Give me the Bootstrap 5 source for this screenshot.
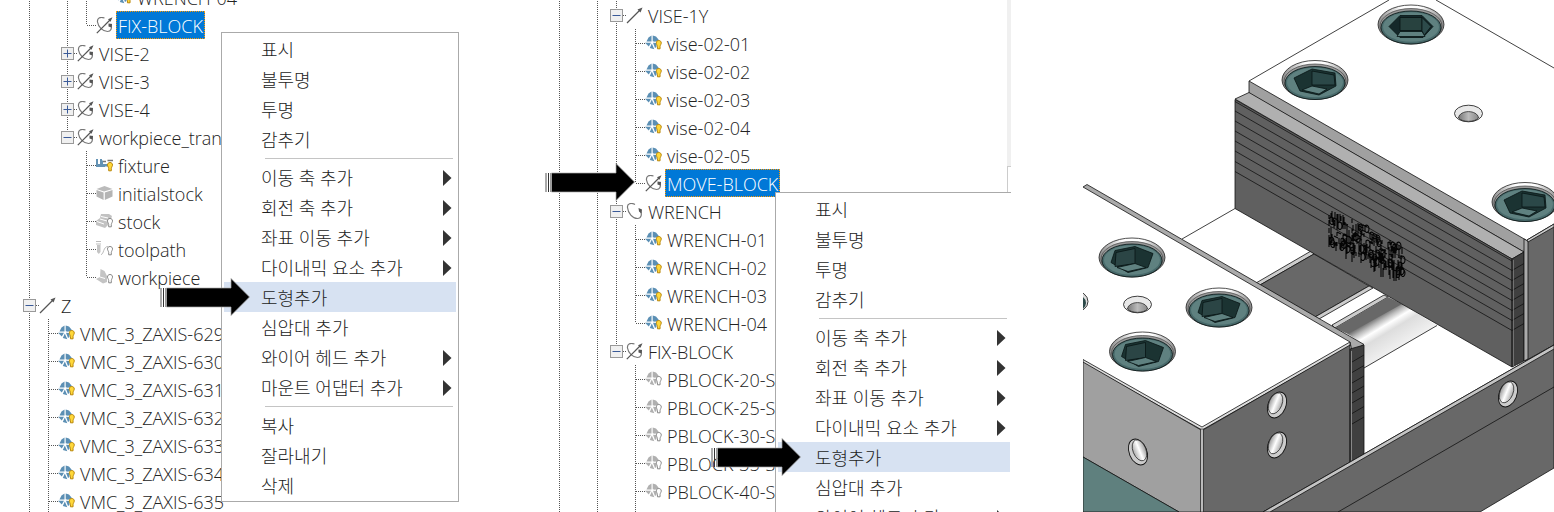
<!DOCTYPE html>
<html lang="ko">
<head>
<meta charset="utf-8">
<meta name="viewport" content="width=device-width, initial-scale=1">
<title>VISE 구성 요소 트리</title>
<link href="https://cdn.jsdelivr.net/npm/bootstrap@5.3.0/dist/css/bootstrap.min.css" rel="stylesheet">
<style>
  body { font-family: "Open Sans", "Noto Sans CJK KR", sans-serif; color: #222; background: #fff; }
  .stage { display: grid; grid-template-columns: 530fr 481fr 72fr 471fr; }
  .tree { padding-left: 20px; font-size: 18px; font-weight: 300; line-height: 28px; }
  .tree-scrolled { margin-top: -17px; }
  .tree-top { padding-top: 1px; }
  .tree-row { height: 28px; }
  .cell { width: 19px; height: 28px; flex: none; position: relative; padding: 0; border: 0; background: none; }
  .rail, .half { background: repeating-linear-gradient(#555 0 1px, transparent 1px 2px) 9px 0 / 1px 100% no-repeat; }
  .half { background-size: 1px 14px; }
  .twig::after { content: ""; position: absolute; left: 10px; right: 0; top: 14px; height: 1px; background: repeating-linear-gradient(90deg, #555 0 1px, transparent 1px 2px); }
  .knob { position: absolute; left: 3px; top: 8px; z-index: 1; display: block; }
  .tree-icon { width: 17px; height: 17px; flex: none; overflow: visible; }
  .tag { margin-left: 3px; padding: 0 2px; height: 28px; border: 0; background: none; color: inherit; font-weight: inherit; line-height: 30px; text-align: left; white-space: nowrap; }
  .tag.picked { background: #0078d7; color: #fff; outline: 1px dotted #f90; outline-offset: -1px; }
  .ctx { width: 238px; padding: 1px 2px; background: #fff; border: 1px solid #aaa; z-index: 2; }
  .ctx button { height: 30px; padding: 1px 4px 0 37px; font-size: 18px; font-weight: 300; line-height: 30px; color: #222; display: flex; align-items: center; justify-content: space-between; border: 0; background: none; width: 100%; }
  .ctx button.hot { background: #d7e2f2; }
  .ctx hr { margin: 4px 3px 3px 41px; border: 0; border-top: 1px solid #c4c4c4; opacity: 1; }
  .ctx-a { left: 221px; top: 32px; }
  .ctx-b { left: 245px; top: 192px; }
  .pointer { width: 90px; height: 39px; z-index: 3; }
  .p1 { left: 160px; top: 278px; }
  .p2 { left: 15px; top: 163px; }
  .p3 { left: 181px; top: 438px; }
  .edge { width: 4px; }
  .edge-track { height: 166px; background: #f0f0f0; }
  .edge-end { height: 27px; border-left: 1px solid #ccc; border-top: 1px solid #ccc; }
</style>
</head>
<body class="overflow-hidden">
<svg class="d-none" aria-hidden="true">
  <defs>
    <symbol id="i-axis" viewBox="0 0 17 17"><path d="M1 16 14 3" stroke="#555" stroke-width="1.2" fill="none"/><path d="m16.500.500-5 2 3 3z" fill="#555"/></symbol>
    <symbol id="i-rot" viewBox="0 0 17 17"><path d="M9 1.500C5-.500 1 .500 1.500 4.500 2 10 6.500 15.500 11.500 15.500 15.500 15.500 16 11 14.500 8" stroke="#777" stroke-width="1.200" fill="none"/><path d="m12.500 5 3.500 1.500-.500 4-2.500-2z" fill="#555"/></symbol>
    <symbol id="i-csys" viewBox="0 0 17 17"><path d="M8.500 1C4-.500 1 1 1.500 5 2.200 10 7 14.500 11.500 14.500 15 14.500 16 11.500 15 7" stroke="#777" stroke-width="1.200" fill="none"/><path d="M.800 16.200 14 3" stroke="#555" stroke-width="1.200"/><path d="m16.500.300-4.500 2 2.500 2.500zM12.500 6.500l3.500.500-.500 3.500-3-1z" fill="#555"/></symbol>
    <symbol id="bulb" viewBox="0 0 6 10"><path d="M3 .500C1.300.500.500 1.600.500 3c0 1.200.900 1.800 1.200 3.500v2.300h2.600V6.500C4.600 4.800 5.500 4.200 5.500 3 5.500 1.600 4.700.500 3 .500z" fill="var(--b)" stroke="var(--s)"/></symbol>
    <symbol id="i-geo" viewBox="0 0 17 17"><path d="M6.500.500V6.500H1.500L3.500 2.500zM7.700.500 11 1.500 13.500 4.500 14 5.500 10 6.800 7.700 6.200zM0 7.700H6L3.800 11.500zM6.800 8.500 9.300 14.200 4.800 13z M8 7.800l3.500.300v4l-1.500 1z" fill="var(--g)"/><use href="#bulb" x="10.500" y="5" width="6.500" height="10"/></symbol>
    <symbol id="i-fixture" viewBox="0 0 17 17"><path d="M0 2h2v5h2V2h2v5h3v3H0zM6 3.500h1V7H6zM8 7h4v2.500H8z" fill="#6493b5"/><path d="M7 4.500h3M11.500 3.500H17" stroke="#777" stroke-width="1.500"/><use href="#bulb" x="11" y="5" width="6" height="10"/></symbol>
    <symbol id="i-box" viewBox="0 0 17 17"><path d="M8.500 1 16.500 4 8 6.500.500 4z" fill="#bbb"/><path d="M.500 5 7.600 7.500V15L.500 11.500zM16.500 5 8.800 7.500V15l7.700-3.500z" fill="#b4b4b4"/></symbol>
    <symbol id="i-stock" viewBox="0 0 17 17"><path d="M5 1h8l3 2-1 3-3 6-3 3-9-3V8l4-3z" fill="#c2c2c2"/><path d="M5 3.500 12 5M1 8.500l7 2.500M4 6l7 2" stroke="#fff" fill="none"/><use href="#bulb" x="11" y="5" width="6" height="10"/></symbol>
    <symbol id="i-path" viewBox="0 0 17 17"><path d="M0 .500h5M0 3h5" stroke="#bbb"/><path d="M1 4h3.500v7l-1.700 2L1 11z" fill="#c4c4c4"/><path d="M5 13.500c3 0 2-8 7-8" stroke="#bbb" fill="none"/><use href="#bulb" x="11" y="5" width="6" height="10"/></symbol>
    <symbol id="i-work" viewBox="0 0 17 17"><path d="m4.500 0 4 2 2.500 5v6l-4 1.500L0 10l4-2z" fill="#c4c4c4"/><path d="M4 8l5 1.500" stroke="#fff"/><use href="#bulb" x="11" y="5" width="6" height="10"/></symbol>
    <symbol id="k-plus" viewBox="0 0 13 13"><rect x=".5" y=".5" width="12" height="12" fill="#f0f0f0" stroke="#999"/><path d="M2.500 6.500h8M6.500 2.500v8" stroke="#3a5a98"/></symbol>
    <symbol id="k-minus" viewBox="0 0 13 13"><rect x=".5" y=".5" width="12" height="12" fill="#f0f0f0" stroke="#999"/><path d="M2.500 6.500h8" stroke="#3a5a98"/></symbol>
    <symbol id="arrow" viewBox="0 0 90 39"><path d="M1 10V29" stroke="#aaa" stroke-width="2"/><path d="M3.500 10V29" stroke="#333"/><path d="M5.500 10V29" stroke="#999"/><path d="M6.500 10H71V.500L89.500 19 71 37.500V29H6.500z" stroke="#aaa" stroke-width=".7"/></symbol>
  </defs>
</svg>

<main class="stage vh-100 overflow-hidden">
  <section class="position-relative overflow-hidden">
    <div class="tree tree-scrolled" data-tree="left"></div>
    <div class="ctx ctx-a position-absolute" data-menu></div>
    <svg class="pointer p1 position-absolute"><use href="#arrow"/></svg>
  </section>

  <section class="position-relative overflow-hidden d-flex">
    <div class="tree tree-top flex-grow-1" data-tree="right"></div>
    <div class="edge"><div class="edge-track"></div><div class="edge-end"></div></div>
    <div class="ctx ctx-b position-absolute" data-menu></div>
    <svg class="pointer p2 position-absolute"><use href="#arrow"/></svg>
    <svg class="pointer p3 position-absolute"><use href="#arrow"/></svg>
  </section>

  <div></div>

  <section>
    <svg class="d-block w-100" viewBox="1083 0 471 512" role="img" aria-label="VISE 3D">
      <defs>
        <linearGradient id="cyl" gradientUnits="userSpaceOnUse" x1="1374" y1="319" x2="1395" y2="354"><stop offset="0" stop-color="#777"/><stop offset=".12" stop-color="#bbb"/><stop offset=".27" stop-color="#fff"/><stop offset=".45" stop-color="#ddd"/><stop offset="1" stop-color="#f4f4f4"/></linearGradient>
        <linearGradient id="bore"><stop offset="0" stop-color="#777"/><stop offset=".5" stop-color="#bbb"/><stop offset="1" stop-color="#888"/></linearGradient>
        <linearGradient id="rim"><stop offset="0" stop-color="#888"/><stop offset=".35" stop-color="#fff"/><stop offset=".65" stop-color="#fff"/><stop offset="1" stop-color="#888"/></linearGradient>
        <linearGradient id="tap"><stop offset="0" stop-color="#999"/><stop offset=".5" stop-color="#fff"/><stop offset="1" stop-color="#aaa"/></linearGradient>
        <g id="seat"><ellipse rx="33" ry="19.500" fill="url(#rim)" stroke="#222" stroke-width=".8"/><ellipse cy="1.500" rx="31" ry="17.500" fill="#999" stroke="#444" stroke-width=".7"/><ellipse cy="3" rx="30" ry="16.500" fill="#47696a"/><ellipse cy="2.500" rx="28" ry="14.800" fill="#5f8180" stroke="none"/></g>
        <g id="boltA" stroke="#081414" stroke-width=".8"><use href="#seat"/><path d="M-22 2-11-9H11L22 2 12 13H-11z" fill="#14282a"/><path d="M-11-7H11V6H-11z" fill="#28423f"/><path d="M11-7 20 2 13 11 11 6z" fill="#2d4b4b"/><path d="M-11 7H11L14 12H-14z" fill="#5f8180"/></g>
        <g id="boltB" stroke="#081414" stroke-width=".8"><use href="#seat"/><path d="M-21-2-3-11 20-7 21 6 4 15-15 11z" fill="#1b3332"/><path d="M-3-9 19-5 20 5-3 5z" fill="#2b4848"/><path d="M-3 6 12 9 4 14-13 10z" fill="#5f8180"/></g>
        <g id="boltC" stroke="#081414" stroke-width=".8"><use href="#seat"/><path d="M-21 5-17-7 3-11 21-4 16 10-4 15z" fill="#1b3332"/><path d="M-16-5 3-9V6L-17 9z" fill="#2b4545"/><path d="M-15 10 3 6 14 10-4 14z" fill="#5f8180"/></g>
        <g id="pin"><ellipse rx="14" ry="8.300" fill="#e8e8e8" stroke="#111" stroke-width=".8"/><path d="M-10 4.500C-9-4 9-4 10 4.500 6 9-6 9-10 4.500z" fill="url(#bore)" stroke="#111" stroke-width=".7"/></g>
        <g id="side"><ellipse rx="8.800" ry="13.500" transform="rotate(22)" fill="#ccc" stroke="#111" stroke-width=".9"/><ellipse cx="-2" cy="-1" rx="6.500" ry="11" transform="rotate(22)" fill="url(#tap)" stroke="#222" stroke-width=".7"/></g>
      </defs>

      <!-- guide channel and shaft -->
      <g stroke="#111" stroke-width=".8">
        <path d="M1182 239 1235 208.500" fill="none"/>
        <path d="M1256 283 1311 251 1314 254 1260 285z" fill="#ccc"/>
        <path d="M1260 285 1314 254 1369 286 1315 317z" fill="#686868"/>
        <path d="M1315 317 1369 286 1373 288 1319 319z" fill="#ccc"/>
        <path d="M1332 325 1384 295 1388 297 1335 328z" fill="#ccc"/>
        <path d="M1335 328 1388 297 1404 305 1350 335z" fill="#686868" stroke="none"/>
        <path d="M1348 334 1402 304 1437 325.500 1364 368V345z" fill="url(#cyl)" stroke="none"/>
        <path d="M1364 368 1437 325.500" fill="none"/>
      </g>

      <!-- fixed jaw -->
      <g stroke="#111" stroke-width=".8">
        <path d="M1389 0 1249 81 1527 240 1554 224V68L1436 0z" fill="#fff" stroke="none"/>
        <path d="M1389 0 1249 81M1436 0 1554 68" fill="none"/>
        <path d="M1249 81 1526 240 1524 252 1249 93z" fill="#a0a0a0"/>
        <path d="M1235 99 1249 92.500 1524 252 1512 259z" fill="#b0b0b0"/>
        <path d="M1235 99.500 1512 259V367L1235 208.500z" fill="#606060"/>
        <path d="M1235 101.500 1512 261M1235 111 1512 270.500M1235 121 1512 280.500M1235 131 1512 290.500M1235 141 1512 300.500M1235 151 1512 310.500M1235 161.500 1512 320.500M1235 171.500 1512 330.500" fill="none"/>
        <path d="M1512 259 1524 252V361L1512 367z" fill="#404040"/>
        <path d="M1512 270.500 1524 263.500M1512 280.500 1524 273.500M1512 290.500 1524 283.500M1512 300.500 1524 293.500M1512 310.500 1524 303.500M1512 320.500 1524 313.500M1512 330.500 1524 323.500" fill="none"/>
        <path d="M1513.500 260V366" stroke="#888" stroke-width=".7"/>
        <path d="M1527 240 1554 224V345L1525 361z" fill="#686868"/>
        <path d="M1524 239 1528 241V359L1524 361z" fill="#aaa"/>
        <path d="M1527 240 1554 224V227L1528 242z" fill="#ccc"/>
      </g>
      <path id="engraving" fill="none" stroke="#050505" stroke-width="1.100"/>

      <!-- movable jaw -->
      <g stroke="#111" stroke-width=".8">
        <path d="M1083 186 1352 342 1202 427 1083 359z" fill="#fff" stroke="none"/>
        <path d="M1083 187 1087 184.500 1364 344.500 1352 351 1350 342z" fill="#aaa"/>
        <path d="M1083 359.500 1202 427 1350 342V346L1202 430 1083 363z" fill="#ddd"/>
        <path d="M1083 362 1201 430V512H1179L1083 457z" fill="#a0a0a0"/>
        <path d="M1083 457 1179 512H1083z" fill="#5f807e"/>
        <path d="M1203 430 1350 345V463L1263 512H1203z" fill="#686868"/>
        <path d="M1200.500 429V512H1203.500V429z" fill="#bbb" stroke-width=".6"/>
        <path d="M1350 349 1364 345V455L1350 463z" fill="#404040"/>
        <path d="M1351.500 351V461" stroke="#888" stroke-width="1"/>
        <path d="M1352 362 1364 355M1352 372.500 1364 365.500M1352 383 1364 376M1352 393 1364 386M1352 403 1364 396M1352 413.500 1364 406.500M1352 424 1364 417" fill="none"/>
      </g>

      <!-- front rail -->
      <g stroke="#111" stroke-width=".8">
        <path d="M1263 512 1554 345V468L1480 512z" fill="#686868"/>
        <path d="M1263 512 1554 345V349L1270 512z" fill="#c4c4c4"/>
        <path d="M1338 512 1554 387" fill="none"/>
      </g>

      <use href="#boltA" x="1411" y="24.500"/>
      <use href="#boltB" x="1315" y="80"/>
      <use href="#boltB" x="1525" y="202"/>
      <use href="#boltC" x="1132" y="257.500"/>
      <use href="#boltC" x="1219" y="307.500"/>
      <use href="#boltC" x="1142.500" y="351.500"/>
      <ellipse cx="1074" cy="301.500" rx="14" ry="11" fill="#ddd" stroke="#111" stroke-width=".8"/>
      <ellipse cx="1074" cy="303" rx="12" ry="9" fill="#2b4848"/>
      <use href="#pin" x="1468.500" y="113.500"/>
      <use href="#pin" x="1137.500" y="304.500"/>
      <use href="#side" x="1277" y="405"/>
      <use href="#side" x="1277" y="445"/>
      <use href="#side" x="1508" y="394"/>
      <use href="#side" transform="translate(1138 452) scale(-1 1)"/>
    </svg>
  </section>
</main>

<script>
  // Row: guide pattern, icon, text. Pattern letters, one per level:
  // "|" rail, "." blank, "t" branch, "l" last branch, "+" closed, "-" open, "_" open and last
  const trees = {
    left: [
      ["|.||l", "geo", "WRENCH-04"], ["|.|l", "csys", "FIX-BLOCK", 1],
      ["|.+", "csys", "VISE-2"], ["|.+", "csys", "VISE-3"], ["|.+", "csys", "VISE-4"], ["|._", "csys", "workpiece_tran"],
      ["|..t", "fixture", "fixture"], ["|..t", "box", "initialstock"], ["|..t", "stock", "stock"],
      ["|..t", "path", "toolpath"], ["|..l", "work", "workpiece"], ["-", "axis", "Z"],
      ...[629, 630, 631, 632, 633, 634, 635].map(n => ["|t", "geo", "VMC_3_ZAXIS-" + n])
    ],
    right: [
      ["|.|-", "axis", "VISE-1Y"],
      ...[1, 2, 3, 4, 5].map(n => ["|.||t", "geo", "vise-02-0" + n]),
      ["|.||l", "csys", "MOVE-BLOCK", 1], ["|.|-", "rot", "WRENCH"],
      ...[1, 2, 3, 4].map(n => ["|.||" + (n < 4 ? "t" : "l"), "geo", "WRENCH-0" + n]),
      ["|.|_", "csys", "FIX-BLOCK"],
      ...[20, 25, 30, 35, 40].map(n => ["|.|.t", "off", "PBLOCK-" + n + "-S"]),
      ["|.|.|"]
    ]
  };
  const cellFor = c => {
    if ("+-_".includes(c)) {
      const k = c === "+" ? "plus" : "minus";
      return `<button type="button" class="cell twig ${c === "_" ? "half" : "rail"}" aria-label="${k}"><svg class="knob" width="13" height="13"><use href="#k-${k}"/></svg></button>`;
    }
    return `<span class="cell ${{ "|": "rail", ".": "", t: "rail twig", l: "half twig" }[c]}"></span>`;
  };
  document.querySelectorAll("[data-tree]").forEach(el => {
    el.innerHTML = trees[el.dataset.tree].map(([pat, icon, text, picked]) => {
      const lit = icon === "geo" || icon === "fixture";
      const tint = lit ? "--g:#5b8fb4;--b:#ffd83a;--s:#b8860b" : "--g:#b0b0b0;--b:#fff;--s:#888";
      return `<div class="tree-row d-flex align-items-center">${[...pat].map(cellFor).join("")}` +
        (icon ? `<svg class="tree-icon" style="${tint}"><use href="#i-${icon === "off" ? "geo" : icon}"/></svg><button type="button" class="tag${picked ? " picked" : ""}">${text}</button>` : "") + `</div>`;
    }).join("");
  });

  const items = ["표시", "불투명", "투명", "감추기", "-", "이동 축 추가>", "회전 축 추가>", "좌표 이동 추가>", "다이내믹 요소 추가>",
    "도형추가", "심압대 추가", "와이어 헤드 추가>", "마운트 어댑터 추가>", "-", "복사", "잘라내기", "삭제"];
  document.querySelectorAll("[data-menu]").forEach(el => {
    el.innerHTML = items.map(t => t === "-" ? "<hr>" :
      `<button type="button"${t === "도형추가" ? ' class="hot"' : ""}><span>${t.replace(">", "")}</span>` +
      (t.endsWith(">") ? '<svg width="9" height="16"><path d="M0 0 8.500 8 0 16z" fill="#333"/></svg>' : "") + "</button>").join("");
  });

  // Overlapping part numbers engraved on the jaw plates
  let seed = 7, d = "";
  const rnd = n => (seed = (seed * 16807) % 2147483647) / 2147483647 * n;
  for (let i = 0; i < 260; i++) {
    const x = 1329 + rnd(74), y = 207 + (x - 1329) * .53 + rnd(34), h = 4 + rnd(7);
    const at = `M${x | 0} ${y | 0}`;
    d += i % 3 ? `${at}v${h | 0}` : i % 2 ? `${at}c2-2 4 0 4 3s-2 5-4 2z` : `${at}l4 2`;
  }
  document.getElementById("engraving").setAttribute("d", d);
</script>
<script src="https://cdn.jsdelivr.net/npm/bootstrap@5.3.0/dist/js/bootstrap.bundle.min.js"></script>
</body>
</html>
